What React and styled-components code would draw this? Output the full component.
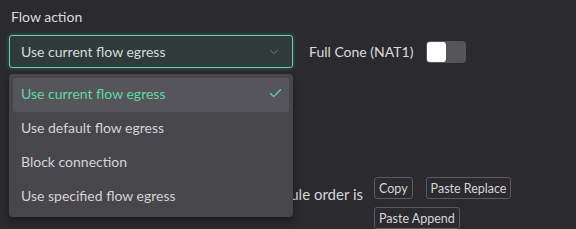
import React from 'react';
import styled, { createGlobalStyle } from 'styled-components';
import { Check, ChevronDown } from 'lucide-react';

const GlobalStyle = createGlobalStyle`
  body {
    margin: 0;
    background: #2a2a2f;
    font-family: Lato, "Noto Sans", sans-serif;
    color: #d6d6d8;
  }
`;

const Page = styled.div`
  position: relative;
  padding: 8px 9px;
  height: 229px;
  box-sizing: border-box;
  overflow: hidden;
`;

const Label = styled.div`
  font-size: 14px;
  line-height: 18px;
  padding-left: 2px;
  margin-bottom: 9px;
  color: #dcdcde;
`;

const Row = styled.div`
  display: flex;
  align-items: center;
`;

const SelectWrap = styled.div`
  position: relative;
  width: 284px;
`;

const Select = styled.div`
  height: 33px;
  box-sizing: border-box;
  border: 1px solid #5fd6a8;
  border-radius: 3px;
  background: #2f3b3a;
  box-shadow: 0 0 4px rgba(95, 214, 168, 0.35);
  display: flex;
  align-items: center;
  justify-content: space-between;
  padding: 0 11px 0 11px;
  font-size: 14px;
  color: #d8dad9;
`;

const Menu = styled.div`
  position: absolute;
  top: 39px;
  left: 0;
  width: 284px;
  box-sizing: border-box;
  padding: 4px 4px 3px;
  background: #46464b;
  border-radius: 4px;
  box-shadow: 0 4px 10px rgba(0, 0, 0, 0.35);
  z-index: 2;
`;

const Item = styled.div`
  height: 34px;
  box-sizing: border-box;
  display: flex;
  align-items: center;
  justify-content: space-between;
  padding: 0 6px 3px 8px;
  border-radius: 3px;
  font-size: 14px;
  background: ${p => (p.$active ? '#56555b' : 'transparent')};
  color: ${p => (p.$active ? '#5fd8a8' : '#d4d4d6')};
`;

const FieldLabel = styled.span`
  font-size: 14px;
  margin-left: 16px;
  margin-right: 13px;
  color: #dcdcde;
`;

const Toggle = styled.div`
  width: 40px;
  height: 22px;
  border-radius: 4px;
  background: #55555a;
  padding: 1px;
  box-sizing: border-box;
`;

const Knob = styled.div`
  width: 19px;
  height: 20px;
  border-radius: 3px;
  background: #ffffff;
`;

const OrderRow = styled.div`
  display: flex;
  align-items: flex-start;
  margin-top: 109px;
  padding-left: 2px;
`;

const OrderText = styled.span`
  font-size: 15px;
  margin-top: 8px;
  white-space: nowrap;
  color: #d6d6d8;
  width: 352px;
  text-align: right;
`;

const Buttons = styled.div`
  display: flex;
  flex-wrap: wrap;
  gap: 8px 13px;
  width: 160px;
  margin-left: 11px;
`;

const Button = styled.button`
  font-family: inherit;
  font-size: 12.5px;
  height: 22px;
  padding: 0 4px;
  background: transparent;
  color: #d6d6d8;
  border: 1px solid #5a5a5f;
  border-radius: 3px;
`;

const options = [
  'Use current flow egress',
  'Use default flow egress',
  'Block connection',
  'Use specified flow egress',
];

export default function App() {
  return (
    <>
      <GlobalStyle />
      <Page>
        <Label>Flow action</Label>
        <Row>
          <SelectWrap>
            <Select>
              <span>Use current flow egress</span>
              <ChevronDown size={14} color="#6f7d7a" strokeWidth={1.5} />
            </Select>
            <Menu>
              {options.map((o, i) => (
                <Item key={o} $active={i === 0}>
                  <span>{o}</span>
                  {i === 0 && <Check size={15} color="#5fd8a8" strokeWidth={2} />}
                </Item>
              ))}
            </Menu>
          </SelectWrap>
          <FieldLabel>Full Cone (NAT1)</FieldLabel>
          <Toggle>
            <Knob />
          </Toggle>
        </Row>
        <OrderRow>
          <OrderText>Rules are matched top to bottom, rule order is</OrderText>
          <Buttons>
            <Button>Copy</Button>
            <Button>Paste Replace</Button>
            <Button>Paste Append</Button>
          </Buttons>
        </OrderRow>
      </Page>
    </>
  );
}
